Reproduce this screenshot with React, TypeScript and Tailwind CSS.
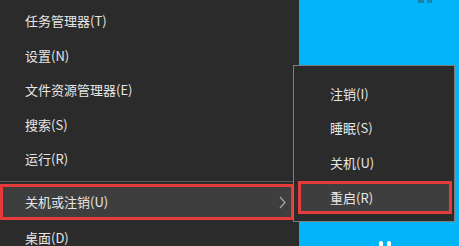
import React from "react";

const font = { fontFamily: '"Noto Sans CJK SC", "Noto Sans", sans-serif' };

const leftItems = ["任务管理器(T)", "设置(N)", "文件资源管理器(E)", "搜索(S)", "运行(R)"];
const subItems = ["注销(I)", "睡眠(S)", "关机(U)"];

const Chevron = () => (
  <svg width="7" height="13" viewBox="0 0 7 13" className="shrink-0">
    <polyline points="1,1 6,6.5 1,12" fill="none" stroke="#a8a8a8" strokeWidth="1.2" />
  </svg>
);

export default function App() {
  return (
    <div
      className="relative flex w-[459px] h-[246px] overflow-hidden text-[13px] text-[#e6e6e6]"
      style={font}
    >
      {/* Win+X menu */}
      <div className="flex w-[299px] flex-col overflow-hidden bg-[#2b2b2b] pt-[3.5px]">
        {leftItems.map((t) => (
          <div key={t} className="flex h-[34.5px] shrink-0 items-center pl-[25px]">
            {t}
          </div>
        ))}
        <div className="shrink-0 pt-[4.5px] pb-[2.5px]">
          <div className="h-px bg-[#595959]" />
        </div>
        <div className="flex h-[36px] w-[294px] shrink-0 items-center justify-between border-[3px] border-[#e53b3b] bg-[#3e3e3e] pl-[22px] pr-[5px]">
          <span>关机或注销(U)</span>
          <Chevron />
        </div>
        <div className="flex h-[36px] shrink-0 items-center pl-[25px]">桌面(D)</div>
      </div>

      {/* desktop */}
      <div className="flex-1 bg-[#02b4f8]" />

      {/* desktop icon fragments */}
      <div className="absolute left-[418px] top-0 h-[3px] w-[6px] bg-[#1a84ad]" />
      <div className="absolute left-[427px] top-0 h-[3px] w-[5px] bg-[#1a84ad]" />
      <div className="absolute left-[379px] top-[241px] h-[5px] w-[4px] rounded-t-full bg-white" />
      <div className="absolute left-[387px] top-[241px] h-[5px] w-[4px] rounded-t-full bg-white" />

      {/* submenu */}
      <div className="absolute left-[293px] top-[65px] flex h-[157px] w-[162px] flex-col border border-[#7d7d7d] bg-[#2b2b2b] pt-[10px]">
        {subItems.map((t) => (
          <div key={t} className="ml-[4px] mr-[2px] flex h-[34.5px] shrink-0 items-center border-[3px] border-transparent pl-[29px]">
            {t}
          </div>
        ))}
        <div className="ml-[4px] mr-[2px] mt-[1.5px] flex h-[33px] shrink-0 items-center border-[3px] border-[#e53b3b] bg-[#3e3e3e] pl-[29px]">
          重启(R)
        </div>
      </div>
    </div>
  );
}
